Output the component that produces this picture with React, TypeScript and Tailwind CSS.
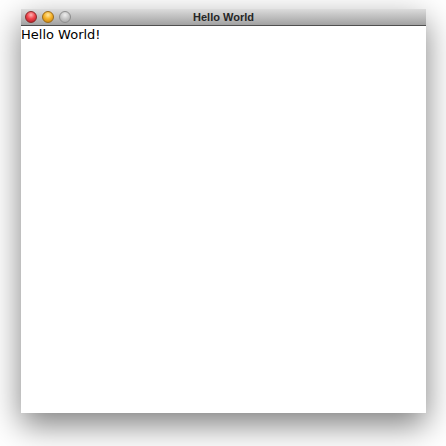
export default function App() {
  const lights = [
    "bg-[radial-gradient(circle_at_50%_30%,#ffb3b3_0%,#f0444c_45%,#a8141c_100%)] border-[#8a2a2a]",
    "bg-[radial-gradient(circle_at_50%_30%,#ffe8a0_0%,#f6b32a_45%,#c07a08_100%)] border-[#9a6a1a]",
    "bg-[radial-gradient(circle_at_50%_30%,#eeeeee_0%,#c4c4c4_50%,#a0a0a0_100%)] border-[#8e8e8e]",
  ];

  return (
    <div className="w-[446px] h-[446px] bg-white pt-[9px] pl-[21px]" style={{ fontFamily: '"Liberation Sans", Arial, sans-serif' }}>
      <div className="w-[405px] h-[404px] flex flex-col bg-white shadow-[0_12px_30px_rgba(0,0,0,0.5)]">
        {/* Title bar */}
        <div className="relative h-[17px] flex items-center bg-gradient-to-b from-[#dcdcdc] to-[#a2a2a2] border-b border-[#4f4f4f]">
          <div className="flex items-center gap-[5px] pl-[4px]">
            {lights.map((c, i) => (
              <div key={i} className={`w-[12px] h-[12px] rounded-full border ${c}`} />
            ))}
          </div>
          <div className="absolute inset-0 flex items-center justify-center text-[11px] font-bold text-[#262626] leading-none">
            Hello World
          </div>
        </div>
        {/* Content */}
        <div className="flex-1 bg-white">
          <p className="text-[13px] leading-[17px] text-black font-['DejaVu_Sans',sans-serif]">Hello World!</p>
        </div>
      </div>
    </div>
  );
}
